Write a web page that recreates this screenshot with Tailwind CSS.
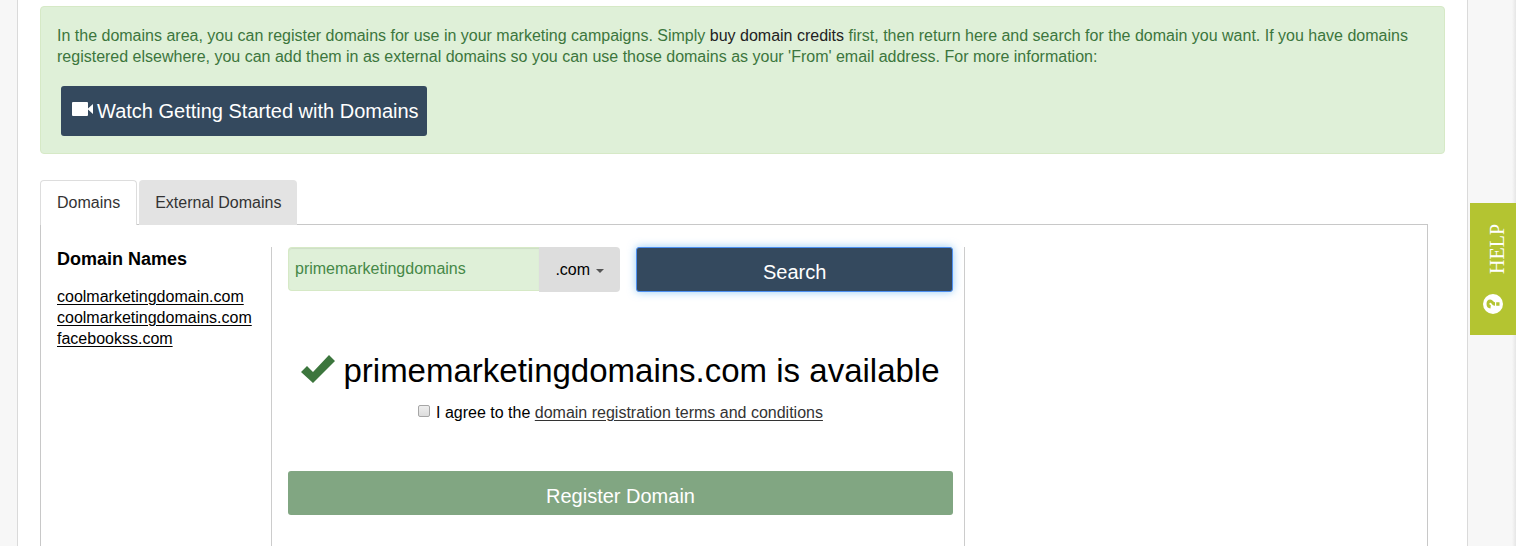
<!DOCTYPE html>
<html lang="en">
<head>
<meta charset="utf-8">
<meta name="viewport" content="width=device-width, initial-scale=1">
<title>Domains</title>
<script src="https://cdn.jsdelivr.net/npm/@tailwindcss/browser@4"></script>
</head>
<body class="relative flex min-h-screen bg-[#f7f7f7] pl-[17px] pr-12 font-['Liberation_Sans',Arial,sans-serif] text-base/[21px] text-black">
  <main class="flex flex-1 flex-col border-x border-[#dadada] bg-white px-[22px] pt-[6px]">
    <section class="rounded-[4px] border border-[#d6e9c6] bg-[#dff0d8] px-4 pt-[18px] pb-[17px] text-[#3c763d]">
      <p>In the domains area, you can register domains for use in your marketing campaigns. Simply <a href="#credits" class="text-[#222]">buy domain credits</a> first, then return here and search for the domain you want. If you have domains registered elsewhere, you can add them in as external domains so you can use those domains as your 'From' email address. For more information:</p>
      <button type="button" class="mt-[19px] ml-1 flex h-[50px] items-center gap-1 rounded-[3px] bg-[#34495e] pr-2 pl-[11px] text-xl text-white">
        <svg class="mb-1 h-[14px] w-[21px]" viewBox="0 0 21 14" fill="currentColor" aria-hidden="true"><path d="M1 0h14a1 1 0 0 1 1 1v12a1 1 0 0 1-1 1H1a1 1 0 0 1-1-1V1a1 1 0 0 1 1-1zM16 6.500L21 2v10L16 7.500z"/></svg>
        Watch Getting Started with Domains
      </button>
    </section>

    <nav class="mt-[26px] flex gap-[2px] text-[#333]" aria-label="Domain type">
      <a href="#domains" class="z-10 -mb-px rounded-t-[4px] border border-b-0 border-[#ddd] bg-white px-4 pt-[11px] pb-3">Domains</a>
      <a href="#external" class="z-10 -mb-px rounded-t-[4px] bg-[#e3e3e3] px-4 pt-3 pb-3">External Domains</a>
    </nav>

    <section class="mr-[17px] grid flex-1 grid-cols-12 border border-b-0 border-[#c8c8c8] pt-[22px]">
      <aside class="col-span-2 border-r border-[#ccc] pl-4">
        <h2 class="pt-[2px] text-lg/[21px] font-bold">Domain Names</h2>
        <ul class="mt-4 underline underline-offset-2">
          <li><a href="#d1">coolmarketingdomain.com</a></li>
          <li><a href="#d2">coolmarketingdomains.com</a></li>
          <li><a href="#d3">facebookss.com</a></li>
        </ul>
      </aside>

      <form class="col-span-6 border-r border-[#ccc] pr-[11px] pl-4">
        <div class="grid grid-cols-[21fr_20fr] gap-4">
          <div class="flex">
            <input type="text" aria-label="Domain name" value="primemarketingdomains" class="h-11 min-w-0 flex-1 rounded-l-[4px] border border-r-0 border-[#d6e9c6] bg-[#dff0d8] px-[6px] text-[#468847] shadow-[inset_0_1px_1px_rgba(0,0,0,0.08)] outline-none">
            <div class="relative">
              <select aria-label="Extension" class="h-[45px] w-[81px] appearance-none rounded-r-[4px] bg-[#ddd] pl-4 outline-none"><option>.com</option><option>.net</option><option>.org</option></select>
              <svg class="pointer-events-none absolute top-[22px] right-4 h-1 w-2" viewBox="0 0 8 4" fill="#555" aria-hidden="true"><path d="M0 0h8L4 4z"/></svg>
            </div>
          </div>
          <button type="button" class="h-[45px] rounded-[3px] border border-[#4d8ff0] bg-[#34495e] pt-1 text-xl text-white shadow-[0_0_8px_rgba(82,168,236,0.6)]">Search</button>
        </div>

        <h1 class="mt-[58px] flex items-center justify-center gap-2 text-[33px]/[42px] whitespace-nowrap">
          <svg class="mb-1 h-7 w-[34px]" viewBox="0 0 34 28" fill="#3c763d" aria-hidden="true"><path d="M0 17L6 11l6 6L28 0l6 6L12 28z"/></svg>
          primemarketingdomains.com is available
        </h1>

        <div class="mt-[10px] flex items-center justify-center gap-[6px]">
          <input type="checkbox" id="agree" class="mb-1 size-3 appearance-none rounded-[2px] border border-[#a6a6a6] bg-linear-to-b from-[#eee] to-[#ddd] checked:bg-[#555]">
          <label for="agree">I agree to the <a href="#terms" class="text-[#333] underline underline-offset-2">domain registration terms and conditions</a></label>
        </div>

        <button type="button" class="mt-12 h-11 w-full rounded-[3px] bg-[#81a682] pt-[6px] text-xl text-white">Register Domain</button>
      </form>
    </section>
  </main>

  <div class="absolute inset-y-0 right-0 w-1 bg-linear-to-r from-[#f7f7f7] to-[#e6e6e6]"></div>
  <button type="button" class="absolute top-[203px] right-0 flex h-[132px] w-[46px] flex-col items-center justify-between bg-[#b4c431] pt-[21px] pb-[21px] pl-2 font-['Liberation_Serif',serif] text-xl/6 text-white">
    <span class="rotate-180 [writing-mode:vertical-rl]">HELP</span>
    <svg class="mr-2 size-5" viewBox="0 0 20 20" aria-hidden="true"><circle cx="10" cy="10" r="10" fill="#fff"/><g transform="rotate(-90 10 10)" fill="#b4c431"><path d="M5.500 7.500Q6 3.500 10 3.500Q14.500 3.500 14.500 7.200Q14.500 9 12.800 10.200Q11.700 11 11.700 12H8.300Q8.200 9.800 10 8.800Q11.200 8.200 11.200 7.300Q11.200 6.400 10.100 6.400Q9.100 6.400 8.900 7.800z"/><path d="M8.300 13.200h3.400v3.300h-3.400z"/></g></svg>
  </button>
</body>
</html>
